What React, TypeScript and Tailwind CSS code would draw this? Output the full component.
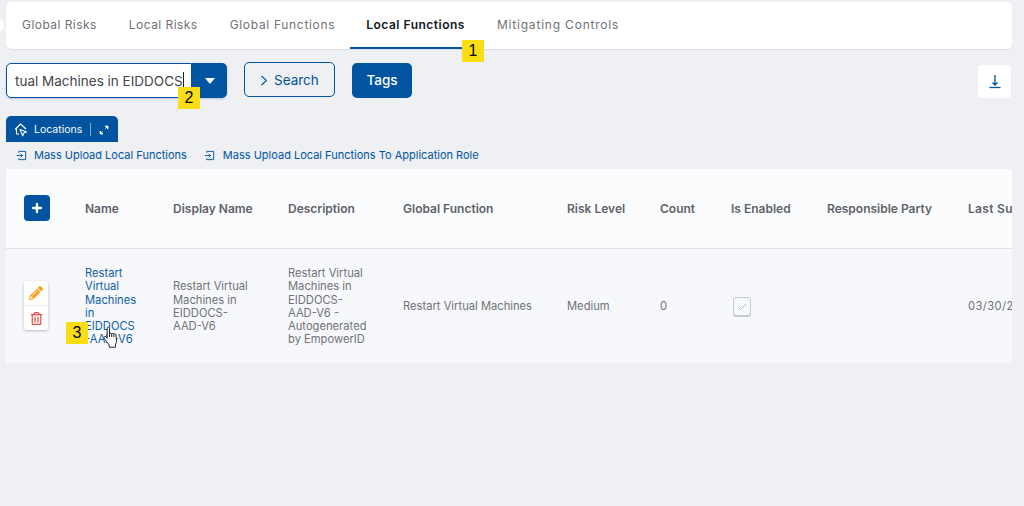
import React from "react";
import { Plus, Check } from "lucide-react";
import { FaPencilAlt, FaRegTrashAlt } from "react-icons/fa";

const font = { fontFamily: "Inter, 'Open Sans', sans-serif" };

function Badge({ n, className }: { n: string; className: string }) {
  return (
    <div className={`absolute w-[22px] h-[22px] bg-[#fbdd13] text-black text-[16px] flex items-center justify-center [font-family:'Liberation_Sans',sans-serif] ${className}`}>
      {n}
    </div>
  );
}

function UploadIcon() {
  return (
    <svg width="11" height="11" viewBox="0 0 12 12" fill="none" stroke="#0054a0" strokeWidth="1" className="shrink-0">
      <path d="M3 3V1.5h7.5v9H3V9" />
      <path d="M0.8 6H7M5 4l2 2-2 2" />
    </svg>
  );
}

function LocationIcon() {
  return (
    <svg width="14" height="14" viewBox="0 0 14 14" fill="none" stroke="#fff" strokeWidth="1.1" strokeLinejoin="round">
      <path d="M1 6.5 6.5 1 12 6M2.5 5.5V11H5" />
      <path d="M6 6.5l6.5 2.6-2.8 1-1 2.8z" />
    </svg>
  );
}

function ExpandIcon() {
  return (
    <svg width="10" height="10" viewBox="0 0 10 10" fill="#fff" stroke="#fff" strokeWidth="0.7">
      <path d="M6 1h3v3zM1 9V6l3 3z" />
      <path d="M8 2 6.2 3.8M2 8l1.8-1.8" />
    </svg>
  );
}

function DownloadIcon() {
  return (
    <svg width="12" height="15" viewBox="0 0 12 15" fill="none" stroke="#0054a0" strokeWidth="1.3">
      <path d="M6 1v10M3.5 8.5 6 11l2.5-2.5" />
      <path d="M0.5 13.5h11" />
    </svg>
  );
}

function ChevronIcon() {
  return (
    <svg width="8" height="11" viewBox="0 0 8 11" fill="none" stroke="#0054a0" strokeWidth="1.1">
      <path d="M1.5 1 6.5 5.5 1.5 10" />
    </svg>
  );
}

const tabs = [
  { t: "Global Risks", c: "border-transparent text-[#6f7278] tracking-[0.45px]" },
  { t: "Local Risks", c: "border-transparent text-[#6f7278] tracking-[0.45px]" },
  { t: "Global Functions", c: "border-transparent text-[#6f7278] tracking-[0.68px]" },
  { t: "Local Functions", c: "border-[#0054a0] text-[#15171c] font-semibold tracking-[0.5px] -ml-[1px]" },
  { t: "Mitigating Controls", c: "border-transparent text-[#6f7278] tracking-[0.8px]" },
];
const heads = [
  ["Name", "w-[88px]"],
  ["Display Name", "w-[115px]"],
  ["Description", "w-[115px]"],
  ["Global Function", "w-[164px]"],
  ["Risk Level", "w-[93px]"],
  ["Count", "w-[71px]"],
  ["Is Enabled", "w-[96px]"],
  ["Responsible Party", "w-[141px]"],
  ["Last Submitted", "w-[160px] tracking-[0.3px]"],
];

function Lines({ items }: { items: string[] }) {
  return (
    <>
      {items.map((l) => (
        <div key={l} className="whitespace-nowrap">{l}</div>
      ))}
    </>
  );
}

export default function App() {
  return (
    <div style={font} className="relative w-[1024px] h-[506px] overflow-hidden bg-[#eef0f4]">
      <div className="pt-[2px] pl-[6px] pr-[12px]">
        {/* Tabs */}
        <div className="h-[47px] bg-white rounded-[5px] shadow-[0_1px_1px_#dcdee2] flex">
          {tabs.map(({ t, c }) => (
            <div key={t} className={`h-[47px] px-[16px] flex items-center text-[12px] border-b-2 ${c}`}>
              {t}
            </div>
          ))}
        </div>

        {/* Controls */}
        <div className="flex items-start mt-[14px] h-[35px]">
          <div className="flex w-[221px] h-[35px] rounded-[5px] shadow-[0_1px_2px_#b8c4d4]">
            <div className="w-[186px] h-[35px] bg-white border border-[#0054a0] rounded-l-[5px] pl-[8px] pt-[1px] flex items-center text-[13.5px] text-[#43464c] overflow-hidden whitespace-nowrap">
              tual Machines in EIDDOCS
              <span className="w-px h-[18px] bg-[#222]" />
            </div>
            <div className="w-[35px] h-[35px] bg-[#0054a0] rounded-r-[5px] flex items-center justify-center">
              <span className="w-0 h-0 border-l-[5px] border-r-[5px] border-t-[6px] border-l-transparent border-r-transparent border-t-white" />
            </div>
          </div>
          <button className="ml-[17px] w-[91px] h-[35px] -mt-[1px] pt-[1px] pl-[15px] border border-[#0054a0] rounded-[5px] flex items-center gap-[6px] text-[13.5px] text-[#0054a0]">
            <ChevronIcon />
            Search
          </button>
          <button className="ml-[17px] w-[60px] h-[35px] bg-[#0054a0] rounded-[5px] text-white text-[13.5px] font-medium">
            Tags
          </button>
          <button className="ml-auto mt-[2px] mr-[1px] w-[33px] h-[33px] bg-white rounded-[4px] flex items-center justify-center">
            <DownloadIcon />
          </button>
        </div>

        {/* Locations tab */}
        <div className="mt-[18px] w-[112px] h-[26px] pt-[1px] bg-[#0054a0] rounded-t-[5px] flex items-center pl-[8px] text-white text-[10.5px]">
          <LocationIcon />
          <span className="ml-[6px]">Locations</span>
          <span className="ml-[8px] w-px h-[13px] bg-[#7fa9cf]" />
          <span className="ml-[8px]"><ExpandIcon /></span>
        </div>

        {/* Links */}
        <div className="flex items-center h-[27px] text-[11px] text-[#0054a0]">
          <div className="flex items-center ml-[10px] gap-[7px]"><UploadIcon /><span>Mass Upload Local Functions</span></div>
          <div className="flex items-center ml-[17px] gap-[8px]"><UploadIcon /><span>Mass Upload Local Functions To Application Role</span></div>
        </div>

        {/* Table */}
        <div className="overflow-hidden">
          <table className="table-fixed w-[1122px] border-collapse text-left">
            <thead>
              <tr className="h-[79px] bg-[#fbfcfe] border-b border-[#dfe1e5]">
                <th className="w-[79px] p-0 pl-[18px]">
                  <div className="w-[26px] h-[26px] bg-[#0054a0] rounded-[4px] flex items-center justify-center">
                    <Plus size={14} strokeWidth={4} color="#fff" />
                  </div>
                </th>
                {heads.map(([h, w]) => (
                  <th key={h} className={`${w} p-0 pt-[1px] text-[12px] font-semibold text-[#5f6268] whitespace-nowrap`}>{h}</th>
                ))}
              </tr>
            </thead>
            <tbody>
              <tr className="h-[115px] bg-[#f7f8fb] text-[11.2px] leading-[13.2px] text-[#6f7278]">
                <td className="p-0 pl-[18px]">
                  <div className="w-[24px] rounded-[3px] shadow-[0_1px_3px_#b5b7bb]">
                    <div className="h-[25px] bg-white rounded-t-[3px] flex items-center justify-center border-b border-[#eee]">
                      <FaPencilAlt size={14} color="#f7a21b" />
                    </div>
                    <div className="h-[24px] bg-white rounded-b-[3px] flex items-center justify-center">
                      <FaRegTrashAlt size={13} color="#f24848" />
                    </div>
                  </div>
                </td>
                <td className="p-0 pt-[2px] text-[#0f5fa8]">
                  <Lines items={["Restart", "Virtual", "Machines", "in", "EIDDOCS", "-AAD-V6"]} />
                </td>
                <td className="p-0 pt-[2px]">
                  <Lines items={["Restart Virtual", "Machines in", "EIDDOCS-", "AAD-V6"]} />
                </td>
                <td className="p-0 pt-[2px]">
                  <Lines items={["Restart Virtual", "Machines in", "EIDDOCS-", "AAD-V6 -", "Autogenerated", "by EmpowerID"]} />
                </td>
                <td className="p-0 pt-[2px]">Restart Virtual Machines</td>
                <td className="p-0 pt-[2px]">Medium</td>
                <td className="p-0 pt-[2px]">0</td>
                <td className="p-0 pl-[2px] pt-[2px]">
                  <div className="w-[18px] h-[19px] bg-[#f7f8fb] border border-[#c6c9ce] rounded-[3px] shadow-[0_1px_0_#c6c9ce] flex items-center justify-center">
                    <Check size={12} color="#8fb2d6" strokeWidth={1.7} />
                  </div>
                </td>
                <td className="p-0"></td>
                <td className="p-0 pt-[2px] whitespace-nowrap tracking-[0.4px]">03/30/2023</td>
              </tr>
            </tbody>
          </table>
        </div>
      </div>

      <Badge n="1" className="left-[462px] top-[40px]" />
      <Badge n="2" className="left-[178px] top-[87px]" />
      <Badge n="3" className="left-[66px] top-[322px]" />

      {/* Hand cursor */}
      <svg className="absolute left-[103px] top-[326px]" width="17" height="23" viewBox="0 0 17 23" fill="#fff" stroke="#23262b" strokeWidth="1" strokeLinejoin="round">
        <path d="M4.2 2.2c0-1.5 2.3-1.5 2.3 0V8c0-.9 2-1 2.2 0 0-.8 2-.9 2.1.2.2-.7 2-.6 2.1.5l.6 5.3c.2 2-.4 3-1 4.5v2.7H6.2v-2.2C5 17 2 14.5.9 11.6c-.3-1 .9-1.7 1.8-.9l1.5 1.7z" />
        <path d="M6.5 8v3M8.7 8v3M10.8 8.2v3" fill="none" />
      </svg>

      {/* Left edge remnant */}
      <div className="absolute -left-[9px] top-[19px] w-[13px] h-[13px] rounded-full bg-white" />
    </div>
  );
}
